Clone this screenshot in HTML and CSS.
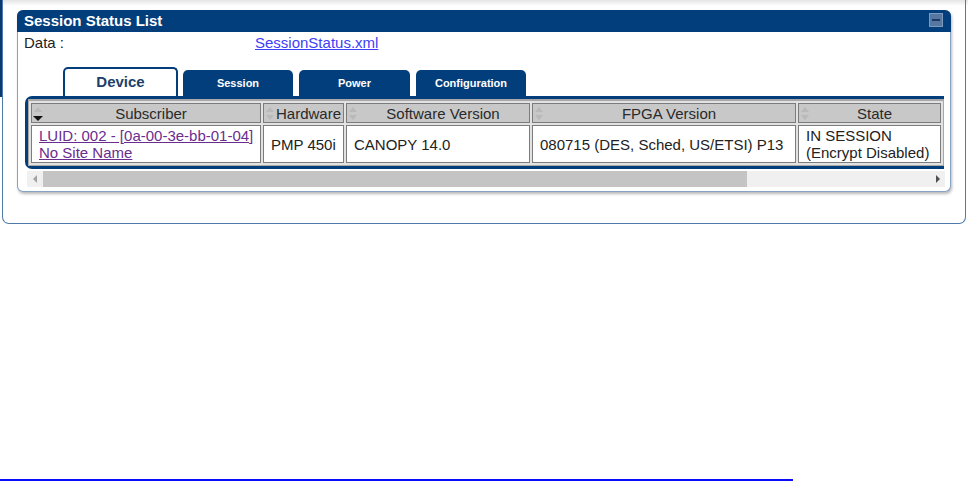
FILE: index.html
```html
<!DOCTYPE html>
<html>
<head>
<meta charset="utf-8">
<title>Session Status List</title>
<link rel="stylesheet" href="styles.css">
</head>
<body>
<div class="frame">
  <div class="panel">
    <div class="panel-head">
      <span class="panel-title">Session Status List</span>
      <svg class="min-icon" width="14" height="14" viewBox="0 0 14 14"><rect x="0.5" y="0.5" width="13" height="13" fill="#56779f" stroke="#7b99bf"/><rect x="3" y="6" width="8" height="2" fill="#1b3a63"/></svg>
    </div>
    <div class="panel-body">
      <div class="data-row"><span class="data-label">Data :</span><a class="data-link" href="#">SessionStatus.xml</a></div>
      <div class="tabs">
        <div class="tab active">Device</div>
        <div class="tab">Session</div>
        <div class="tab wide">Power</div>
        <div class="tab">Configuration</div>
      </div>
      <div class="grid-clip">
        <div class="grid-box">
          <table class="grid">
            <colgroup>
              <col class="c-sub"><col class="c-hw"><col class="c-sw"><col class="c-fpga"><col class="c-state">
            </colgroup>
            <thead>
              <tr>
                <th><svg class="sort" width="10" height="16" viewBox="0 0 10 16"><path d="M5 2 L9 7 H1 Z" fill="#b9b9b9"/><path d="M0 11 H10 L5 16 Z" fill="#111"/></svg>Subscriber</th>
                <th><svg class="sort" width="10" height="16" viewBox="0 0 10 16"><path d="M5 2 L9 7 H1 Z" fill="#b9b9b9"/><path d="M1 10 H9 L5 15 Z" fill="#b9b9b9"/></svg>Hardware</th>
                <th><svg class="sort" width="10" height="16" viewBox="0 0 10 16"><path d="M5 2 L9 7 H1 Z" fill="#b9b9b9"/><path d="M1 10 H9 L5 15 Z" fill="#b9b9b9"/></svg>Software Version</th>
                <th><svg class="sort" width="10" height="16" viewBox="0 0 10 16"><path d="M5 2 L9 7 H1 Z" fill="#b9b9b9"/><path d="M1 10 H9 L5 15 Z" fill="#b9b9b9"/></svg>FPGA Version</th>
                <th><svg class="sort" width="10" height="16" viewBox="0 0 10 16"><path d="M5 2 L9 7 H1 Z" fill="#b9b9b9"/><path d="M1 10 H9 L5 15 Z" fill="#b9b9b9"/></svg>State</th>
              </tr>
            </thead>
            <tbody>
              <tr>
                <td class="nowrap"><a class="sub-link" href="#">LUID: 002 - [0a-00-3e-bb-01-04]<br>No Site Name</a></td>
                <td class="nowrap">PMP 450i</td>
                <td class="nowrap">CANOPY 14.0</td>
                <td class="nowrap">080715 (DES, Sched, US/ETSI) P13</td>
                <td class="top nowrap">IN SESSION<br>(Encrypt Disabled)</td>
              </tr>
            </tbody>
          </table>
        </div>
      </div>
      <div class="hscroll">
        <div class="sb-btn"><svg width="5" height="8" viewBox="0 0 5 8"><path d="M4 0 V8 L0 4 Z" fill="#a3a3a3"/></svg></div>
        <div class="sb-thumb"></div>
        <div class="sb-track"></div>
        <div class="sb-btn"><svg width="5" height="8" viewBox="0 0 5 8"><path d="M1 0 V8 L5 4 Z" fill="#505050"/></svg></div>
      </div>
    </div>
  </div>
</div>
<div class="bottom-rule"></div>
</body>
</html>
```
FILE: styles.css
```css
* { box-sizing: border-box; }
html, body { margin: 0; padding: 0; }
body {
  font-family: "Liberation Sans", Arial, sans-serif;
  font-size: 15px;
  color: #222;
  width: 968px;
  height: 481px;
  overflow: hidden;
  background:
    linear-gradient(#0b3a72, #0b3a72) 0 0 / 3px 97px no-repeat,
    linear-gradient(#e4e4e4, #ffffff) 0 0 / 100% 6px no-repeat,
    #ffffff;
}
.frame {
  margin: 0 2px;
  border: 1px solid #4f79aa;
  border-top: none;
  border-radius: 0 0 7px 7px;
  padding: 10px 14px 31px 14px;
}
.panel {
  border: 1px solid #86a3c6;
  border-top: none;
  border-radius: 6px;
  background: #fff;
  box-shadow: 1px 2px 3px rgba(0, 0, 0, 0.28);
}
.panel-head {
  height: 22px;
  margin: 0 -1px;
  background: #033e7c;
  border-radius: 6px 6px 0 0;
  display: flex;
  align-items: center;
  justify-content: space-between;
  padding: 0 8px 0 7px;
}
.panel-title {
  color: #fff;
  font-weight: bold;
  font-size: 15px;
  line-height: 18px;
}
.min-icon { display: block; margin-top: -2px; }
.panel-body {
  padding: 2px 6px 4px 7px;
}
.data-row {
  display: flex;
  line-height: 17px;
  margin-left: -1px;
}
.data-label { width: 231px; color: #222; }
.data-link { color: #4040f8; text-decoration: underline; }
.tabs {
  display: flex;
  align-items: flex-end;
  gap: 6px;
  margin-top: 16px;
  padding-left: 38px;
}
.tab {
  width: 110px;
  height: 26px;
  background: #033e7c;
  color: #fff;
  font-weight: bold;
  font-size: 11px;
  border-radius: 5px 5px 0 0;
  display: flex;
  align-items: center;
  justify-content: center;
}
.tab.wide { width: 111px; }
.tab.active {
  width: 115px;
  height: 29px;
  margin-right: -1px;
  background: #fff;
  border: 2px solid #033e7c;
  border-bottom: none;
  color: #1e3f6b;
  font-size: 15px;
  padding-bottom: 3px;
}
.grid-clip {
  width: 920px;
  overflow: hidden;
}
.grid-box {
  width: max-content;
  border: 3px solid #033e7c;
  border-right: none;
  border-radius: 7px 0 0 7px;
  background: #e2e2e2;
}
.grid {
  width: 916px;
  table-layout: fixed;
  border-collapse: separate;
  border-spacing: 2px;
  border: 1px solid #a8a8a8;
  border-top-width: 2px;
  background: #e2e2e2;
}
.c-sub { width: 230px; }
.c-hw { width: 81px; }
.c-sw { width: 184px; }
.c-fpga { width: 264px; }
.c-state { width: 143px; }
.grid th {
  position: relative;
  height: 20px;
  background: #c8c8c8;
  border: 1px solid #7c7c7c;
  font-weight: normal;
  font-size: 15px;
  line-height: 17px;
  padding: 0 2px 0 12px;
  text-align: center;
  color: #2a2a2a;
  white-space: nowrap;
  overflow: hidden;
}
.sort { position: absolute; left: 1px; top: 1px; }
.grid td {
  background: #fff;
  border: 1px solid #7c7c7c;
  padding: 1px 7px;
  line-height: 17px;
  height: 38px;
  color: #222;
  vertical-align: middle;
  overflow: hidden;
}
.grid td.top { vertical-align: top; }
.nowrap { white-space: nowrap; }
.sub-link { color: #6a2d8f; text-decoration: underline; }
.hscroll {
  display: flex;
  width: 918px;
  height: 16px;
  margin: 2px 0 0 2px;
  background: #f0f0f0;
}
.sb-btn {
  width: 16px;
  display: flex;
  align-items: center;
  justify-content: center;
}
.sb-btn svg { display: block; }
.sb-thumb { width: 704px; background: #c4c4c4; }
.sb-track { flex: 1; }
.bottom-rule {
  width: 793px;
  height: 2px;
  margin-top: 255px;
  background: #0a0aff;
}
```
